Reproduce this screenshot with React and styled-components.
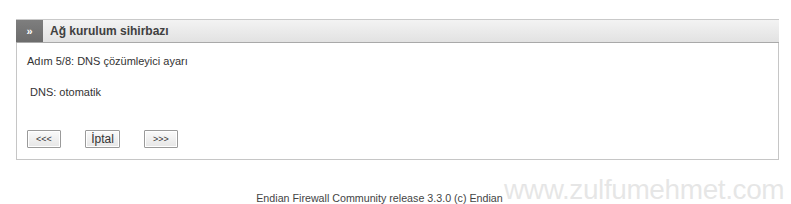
import React from "react";
import styled, { createGlobalStyle } from "styled-components";

const Global = createGlobalStyle`
  html, body { margin: 0; padding: 0; background: #fff; }
  body { font-family: "Liberation Sans", Arial, sans-serif; color: #333; }
`;

const Page = styled.div`
  width: 791px;
  height: 204px;
  position: relative;
  overflow: hidden;
  padding: 19px 12px 0 16px;
  box-sizing: border-box;
`;

const Panel = styled.section`
  width: 763px;
  border: 1px solid #c6c6c6;
  border-top: none;
  box-sizing: border-box;
`;

const Header = styled.div`
  display: flex;
  align-items: stretch;
  height: 24px;
  background: linear-gradient(#f3f3f3, #e2e2e2);
  border-top: 1px solid #c9c9c9;
  border-bottom: 1px solid #a9a9a9;
  box-sizing: border-box;
  margin: 0 -1px;
`;

const Tab = styled.div`
  width: 27px;
  background: linear-gradient(#7e7e7e, #6c6c6c);
  color: #fff;
  font-size: 11px;
  font-weight: bold;
  display: flex;
  align-items: center;
  justify-content: center;
`;

const Title = styled.h1`
  margin: 0 0 0 7px;
  font-size: 12px;
  font-weight: bold;
  color: #404040;
  display: flex;
  align-items: center;
`;

const Body = styled.div`
  padding: 11px 10px 11px 10px;
  font-size: 11px;
  color: #333;
`;

const Step = styled.div`
  height: 14px;
  line-height: 14px;
`;

const Field = styled.div`
  margin: 17px 0 0 3px;
  height: 14px;
  line-height: 14px;
`;

const Buttons = styled.div`
  display: flex;
  gap: 24px;
  margin-top: 31px;
`;

const Button = styled.button`
  font-family: "Liberation Sans", Arial, sans-serif;
  width: ${(p) => p.$w}px;
  height: 18px;
  padding: 0;
  font-size: ${(p) => p.$fs}px;
  color: #333;
  background: linear-gradient(#fafafa, #e6e6e6);
  border: 1px solid #9a9a9a;
  border-radius: 1px;
  box-shadow: inset 0 0 0 1px #fff;
`;

const Footer = styled.div`
  text-align: center;
  margin-top: 32px;
  padding-right: 36px;
  font-size: 10.7px;
  color: #444;
`;

const Watermark = styled.div`
  position: absolute;
  left: 504px;
  top: 176px;
  font-size: 28px;
  line-height: 1;
  font-family: "Liberation Sans", Arial, sans-serif;
  color: rgba(205, 205, 205, 0.5);
  letter-spacing: -0.4px;
  pointer-events: none;
  white-space: nowrap;
`;

export default function App() {
  return (
    <>
      <Global />
      <Page>
        <Panel>
          <Header>
            <Tab>»</Tab>
            <Title>Ağ kurulum sihirbazı</Title>
          </Header>
          <Body>
            <Step>Adım 5/8: DNS çözümleyici ayarı</Step>
            <Field>DNS: otomatik</Field>
            <Buttons>
              <Button $w={34} $fs={9}>&lt;&lt;&lt;</Button>
              <Button $w={35} $fs={12}>İptal</Button>
              <Button $w={34} $fs={9}>&gt;&gt;&gt;</Button>
            </Buttons>
          </Body>
        </Panel>
        <Footer>Endian Firewall Community release 3.3.0 (c) Endian</Footer>
        <Watermark>www.zulfumehmet.com</Watermark>
      </Page>
    </>
  );
}
